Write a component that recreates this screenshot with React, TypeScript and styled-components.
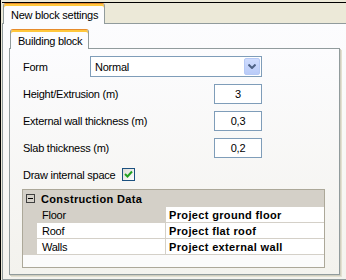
import React from 'react'
import styled, { createGlobalStyle } from 'styled-components'

const GlobalStyle = createGlobalStyle`
  html, body {
    margin: 0;
    padding: 0;
  }
  body {
    background: #ece9d8;
    font-family: Tahoma, "Liberation Sans", Arial, sans-serif;
    font-size: 11px;
    letter-spacing: -0.25px;
    color: #000;
  }
`

const Window = styled.div`
  width: 346px;
  height: 280px;
  overflow: hidden;
  box-sizing: border-box;
  background: #ece9d8;
  border-left: 1px solid #000;
  padding: 2px 0 0 1px;
  display: flex;
  flex-direction: column;
`

const TabStrip = styled.div<{ $line?: boolean }>`
  display: flex;
  align-items: flex-end;
  height: ${({ $line }) => ($line ? '21px' : '20px')};
  padding-left: 1px;
  box-shadow: ${({ $line }) => ($line ? 'inset 0 1px 0 #000' : 'none')};
  position: relative;
  z-index: 1;
  flex-shrink: 0;
`

const Tab = styled.div`
  box-sizing: border-box;
  height: 100%;
  margin-bottom: -1px;
  padding: 2px 6px 0 7px;
  display: flex;
  align-items: center;
  background: #fcfcfe;
  border: 1px solid #919b9c;
  border-top: 1px solid #e68b2c;
  border-bottom: none;
  border-radius: 3px 3px 0 0;
  box-shadow: inset 0 2px 0 #ffc73c;
  white-space: nowrap;
`

const OuterPanel = styled.div`
  width: 360px;
  flex: 1;
  border: 1px solid #919b9c;
  background: linear-gradient(#fcfcfe, #f4f3ee);
  padding: 4px 0 0 6px;
  display: flex;
  flex-direction: column;
`

const InnerPanel = styled.div`
  box-sizing: border-box;
  width: 331px;
  height: 227px;
  border: 1px solid #919b9c;
  background: linear-gradient(#fcfcfe, #f3f2ed);
  box-shadow: 1px 1px 0 #d0cebf, 2px 2px 0 #e3e0d0;
  padding: 4px 12px 0 12px;
`

const Row = styled.div`
  height: 27px;
  width: 240px;
  display: flex;
  align-items: center;
  justify-content: space-between;
`

const CheckRow = styled.div`
  height: 27px;
  display: flex;
  align-items: center;
  gap: 7px;
`

const Label = styled.span`
  padding-left: 1px;
`

const Select = styled.div`
  box-sizing: border-box;
  width: 172px;
  height: 21px;
  border: 1px solid #7f9db9;
  background: #fff;
  display: flex;
  align-items: center;
  justify-content: space-between;
  padding: 1px 1px 1px 4px;
`

const DropButton = styled.div`
  box-sizing: border-box;
  width: 16px;
  height: 17px;
  border: 1px solid #b6c9f5;
  border-radius: 2px;
  background: linear-gradient(#cfdcfe, #b9cbf8);
  display: flex;
  align-items: center;
  justify-content: center;
`

const NumberBox = styled.div`
  box-sizing: border-box;
  width: 48px;
  height: 20px;
  border: 1px solid #7f9db9;
  background: #fff;
  display: flex;
  align-items: center;
  justify-content: center;
`

const CheckBox = styled.div`
  box-sizing: border-box;
  width: 13px;
  height: 13px;
  border: 1px solid #1c5180;
  background: linear-gradient(135deg, #dcdcd7, #fff);
  display: flex;
  align-items: center;
  justify-content: center;
`

const Grid = styled.div`
  box-sizing: border-box;
  margin-top: 1px;
  width: 303px;
  height: 79px;
  border: 1px solid #aca899;
  background: #fbfbfb;
`

const GroupHeader = styled.div`
  height: 17px;
  background: #d4d0c8;
  display: flex;
  align-items: center;
  padding-left: 3px;
  gap: 6px;
  font-weight: bold;
  letter-spacing: 0.35px;
`

const Toggle = styled.div`
  box-sizing: border-box;
  width: 9px;
  height: 9px;
  border: 1px solid #404040;
  position: relative;
  &::after {
    content: '';
    position: absolute;
    left: 1px;
    right: 1px;
    top: 3px;
    height: 1px;
    background: #000;
  }
`

const PropRow = styled.div`
  height: 16px;
  display: flex;
`

const Margin = styled.div`
  width: 14px;
  background: #d4d0c8;
`

const Cell = styled.div<{ $selected?: boolean; $value?: boolean }>`
  box-sizing: border-box;
  height: 16px;
  display: flex;
  align-items: center;
  border-bottom: 1px solid #d4d0c8;
  background: ${({ $selected }) => ($selected ? '#d4d0c8' : '#fff')};
  ${({ $value }) =>
    $value
      ? 'flex: 1; padding-left: 3px; font-weight: bold; letter-spacing: 0.35px;'
      : 'width: 129px; padding-left: 5px; border-right: 1px solid #d4d0c8;'}
`

const rows = [
  { name: 'Floor', value: 'Project ground floor', selected: true },
  { name: 'Roof', value: 'Project flat roof' },
  { name: 'Walls', value: 'Project external wall' },
]

const App = () => (
  <>
    <GlobalStyle />
    <Window>
      <TabStrip $line>
        <Tab>New block settings</Tab>
      </TabStrip>
      <OuterPanel>
        <TabStrip>
          <Tab>Building block</Tab>
        </TabStrip>
        <InnerPanel>
          <Row>
            <Label>Form</Label>
            <Select>
              <span>Normal</span>
              <DropButton>
                <svg width="8" height="5" viewBox="0 0 8 5">
                  <path d="M0.5 0.5 L4 4 L7.5 0.5" fill="none" stroke="#4d6185" strokeWidth="2" />
                </svg>
              </DropButton>
            </Select>
          </Row>
          <Row>
            <Label>Height/Extrusion (m)</Label>
            <NumberBox>3</NumberBox>
          </Row>
          <Row>
            <Label>External wall thickness (m)</Label>
            <NumberBox>0,3</NumberBox>
          </Row>
          <Row>
            <Label>Slab thickness (m)</Label>
            <NumberBox>0,2</NumberBox>
          </Row>
          <CheckRow>
            <Label>Draw internal space</Label>
            <CheckBox>
              <svg width="9" height="9" viewBox="0 0 9 9">
                <path d="M1 4 L3.5 6.5 L8 1.5" fill="none" stroke="#21a121" strokeWidth="2" />
              </svg>
            </CheckBox>
          </CheckRow>
          <Grid>
            <GroupHeader>
              <Toggle />
              <span>Construction Data</span>
            </GroupHeader>
            {rows.map((r) => (
              <PropRow key={r.name}>
                <Margin />
                <Cell $selected={r.selected}>{r.name}</Cell>
                <Cell $value>{r.value}</Cell>
              </PropRow>
            ))}
          </Grid>
        </InnerPanel>
      </OuterPanel>
    </Window>
  </>
)

export default App
